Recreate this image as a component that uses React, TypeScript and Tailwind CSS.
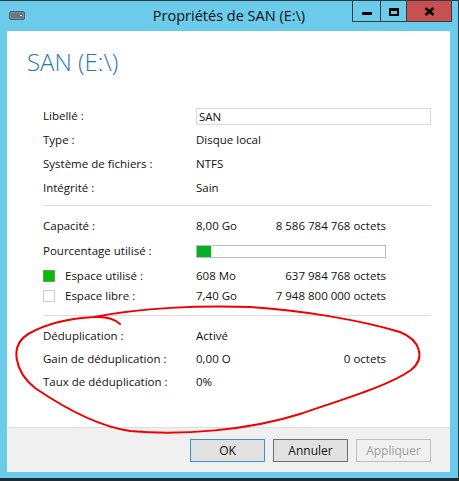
import React from "react";

const FONT = "font-['Open_Sans','Noto_Sans',sans-serif]";

function Row({
  label,
  value,
  right,
  h,
  icon,
}: {
  label: React.ReactNode;
  value?: React.ReactNode;
  right?: React.ReactNode;
  h: string;
  icon?: React.ReactNode;
}) {
  return (
    <div className={`flex items-center ${h}`}>
      <div className="w-[153px] flex items-center">
        {icon}
        <span>{label}</span>
      </div>
      <div className="w-[60px] whitespace-nowrap">{value}</div>
      <div className="w-[130px] text-right whitespace-nowrap">{right}</div>
    </div>
  );
}

function Sep({ mt }: { mt: string }) {
  return <div className={`h-px bg-[#dcdcdc] ${mt}`} />;
}

export default function App() {
  return (
    <div
      className={`relative w-[459px] h-[481px] overflow-hidden bg-[#6bcbea] border-t border-r border-b-[3px] border-t-[#2e3a42] border-r-[#2e3a42] border-b-[#1c2a33] flex flex-col text-[11.5px] text-[#111] ${FONT}`}
    >
      {/* Title bar */}
      <div className="h-[30px] shrink-0 grid grid-cols-[1fr_auto_1fr] items-start px-[6px]">
        <div className="pl-[3px] pt-[10px]">
          <svg width="16" height="9" viewBox="0 0 16 9">
            <rect x="0.5" y="0.5" width="15" height="8" rx="1.5" fill="#7b8b96" stroke="#4f5e68" />
            <rect x="2" y="2" width="12" height="5" fill="#6a7a85" />
            <rect x="11" y="4" width="2" height="1" fill="#cfe3ee" />
          </svg>
        </div>
        <div className="h-[29px] flex items-center text-[14.5px] text-[#111]">
          Propriétés de SAN (E:\)
        </div>
        <div className="flex justify-end">
          <div className="flex border-x border-b border-[#3a3a3a] h-[21px]">
            <div className="w-[27px] flex justify-center">
              <div className="mt-[11px] w-[10px] h-[3px] bg-black" />
            </div>
            <div className="w-[26px] border-l border-[#3a3a3a] flex justify-center">
              <div className="mt-[7px] w-[10px] h-[8px] border-2 border-t-[3px] border-black" />
            </div>
            <div className="w-[45px] border-l border-[#3a3a3a] bg-[#c75050] flex justify-center">
              <svg width="11" height="9" viewBox="0 0 11 9" className="mt-[6px]">
                <path d="M1.5 1 L9.5 8 M9.5 1 L1.5 8" stroke="#000" strokeWidth="2.6" />
              </svg>
            </div>
          </div>
        </div>
      </div>

      {/* Client area */}
      <div className="flex-1 ml-[7px] mr-[8px] mb-[6px] flex flex-col">
        <div className="flex-1 bg-white pl-[20px] pr-[19px] flex flex-col">
          <div className="mt-[15px] h-[32px] leading-[32px] text-[24px] font-light text-[#2a78aa]">
            SAN (E:\)
          </div>

          <div className="ml-[16px] mt-[26px] flex flex-col">
            {/* Section 1 */}
            <div className="flex items-center h-[24px]">
              <div className="w-[153px]">Libellé :</div>
              <div className="flex-1 h-[17px] border border-[#d9d9e3] pl-[2px] leading-[15px]">SAN</div>
            </div>
            <Row h="h-[24px]" label="Type :" value="Disque local" />
            <Row h="h-[24px]" label="Système de fichiers :" value="NTFS" />
            <Row h="h-[24px]" label="Intégrité :" value="Sain" />

            <Sep mt="mt-[5px]" />

            {/* Section 2 */}
            <div className="mt-[8px]" />
            <Row h="h-[24px]" label="Capacité :" value="8,00 Go" right="8 586 784 768 octets" />
            <div className="flex items-center h-[26px]">
              <div className="w-[153px]">Pourcentage utilisé :</div>
              <div className="w-[190px] h-[13px] border border-[#bcbcbc] bg-white flex">
                <div className="w-[14px] h-full bg-[#06b025]" />
              </div>
            </div>
            <div className="mt-[1px]" />
            <Row
              h="h-[22px]"
              icon={<div className="w-[12px] h-[12px] bg-[#00c000] border border-[#6a9a6a] mr-[10px]" />}
              label="Espace utilisé :"
              value="608 Mo"
              right="637 984 768 octets"
            />
            <Row
              h="h-[18px]"
              icon={<div className="w-[12px] h-[12px] bg-white border border-[#cfcfcf] mr-[10px]" />}
              label="Espace libre :"
              value="7,40 Go"
              right="7 948 800 000 octets"
            />

            <Sep mt="mt-[10px]" />

            {/* Section 3 */}
            <div className="mt-[8px]" />
            <Row h="h-[23px]" label="Déduplication :" value="Activé" />
            <Row h="h-[23px]" label="Gain de déduplication :" value="0,00 O" right="0 octets" />
            <Row h="h-[23px]" label="Taux de déduplication :" value="0%" />
          </div>
        </div>

        {/* Footer */}
        <div className="h-[45px] shrink-0 border-t border-[#dfdfdf] bg-[#f0f0f0] flex justify-end items-start pt-[11px] pr-[19px] gap-[8px]">
          <button className="w-[75px] h-[23px] border border-[#3c8fd8] bg-[#e1e1e1] text-[12px] text-[#111]">
            OK
          </button>
          <button className="w-[75px] h-[23px] border border-[#6f6f6f] bg-[#e1e1e1] text-[12px] text-[#111]">
            Annuler
          </button>
          <button className="w-[75px] h-[23px] border border-[#bfbfbf] bg-[#f0f0f0] text-[12px] text-[#a0a0a0]">
            Appliquer
          </button>
        </div>
      </div>

      {/* Red hand-drawn annotation */}
      <svg
        className="absolute left-0 -top-px pointer-events-none"
        width="459"
        height="481"
        viewBox="0 0 459 481"
      >
        <path
          d="M 94 317 C 140 308, 200 305, 250 307 C 300 310, 360 320, 400 332 C 420 340, 426 358, 411 370 C 390 385, 350 397, 300 414 C 250 430, 180 436, 130 431 C 95 426, 60 405, 35 388 C 15 372, 8 345, 30 333 C 50 322, 75 318, 94 317 Q 112 316 120 324"
          fill="none"
          stroke="#f00000"
          strokeWidth="2"
          strokeLinecap="round"
        />
      </svg>
    </div>
  );
}
